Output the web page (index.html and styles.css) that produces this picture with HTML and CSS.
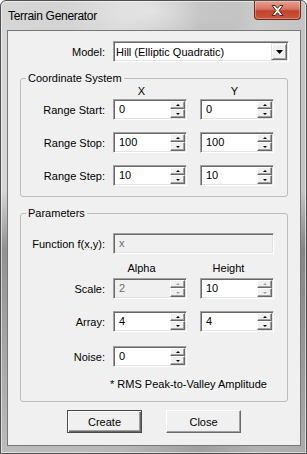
FILE: index.html
```html
<!DOCTYPE html>
<html lang="en">
<head>
  <meta charset="UTF-8" />
  <title>Terrain Generator</title>
  <link rel="stylesheet" href="styles.css">
</head>
<body>

  <!-- Window frame -->
  <div class="window">
    <div class="titlebar">
      <span class="title">Terrain Generator</span>
      <div class="close-x">
        <svg width="13" height="11" viewBox="0 0 13 11">
          <path d="M1 0.5h3.2l2.3 2.8 2.3-2.8h3.2l-3.9 5 3.9 5h-3.2l-2.3-2.8-2.3 2.8h-3.2l3.9-5z" fill="#fff" stroke="#5a2219" stroke-width="1"/>
        </svg>
      </div>
    </div>

    <div class="client">
      <div class="model-row">
        <label>Model:</label>
        <div class="combo">
          <span class="value">Hill (Elliptic Quadratic)</span>
          <span class="drop-btn">
            <svg width="7" height="4" viewBox="0 0 7 4"><path d="M0 0h7L3.5 4z"/></svg>
          </span>
        </div>
      </div>

      <!-- Coordinate System -->
      <fieldset class="group">
        <legend>Coordinate System</legend>
        <div class="head-row"><span>X</span><span class="col-y">Y</span></div>
        <div class="row first">
          <label>Range Start:</label>
          <div class="spin"><span class="val">0</span><span class="arrows"><i class="up"></i><i class="down"></i></span></div>
          <div class="spin"><span class="val">0</span><span class="arrows"><i class="up"></i><i class="down"></i></span></div>
        </div>
        <div class="row">
          <label>Range Stop:</label>
          <div class="spin"><span class="val">100</span><span class="arrows"><i class="up"></i><i class="down"></i></span></div>
          <div class="spin"><span class="val">100</span><span class="arrows"><i class="up"></i><i class="down"></i></span></div>
        </div>
        <div class="row">
          <label>Range Step:</label>
          <div class="spin"><span class="val">10</span><span class="arrows"><i class="up"></i><i class="down"></i></span></div>
          <div class="spin"><span class="val">10</span><span class="arrows"><i class="up"></i><i class="down"></i></span></div>
        </div>
      </fieldset>

      <!-- Parameters -->
      <fieldset class="group params">
        <legend>Parameters</legend>
        <div class="row func">
          <label>Function f(x,y):</label>
          <div class="edit wide disabled"><span class="val">x</span></div>
        </div>
        <div class="head-row gap-top"><span>Alpha</span><span>Height</span></div>
        <div class="row scale">
          <label>Scale:</label>
          <div class="spin disabled"><span class="val">2</span><span class="arrows off"><i class="up"></i><i class="down"></i></span></div>
          <div class="spin"><span class="val">10</span><span class="arrows off"><i class="up"></i><i class="down"></i></span></div>
        </div>
        <div class="row">
          <label>Array:</label>
          <div class="spin"><span class="val">4</span><span class="arrows"><i class="up"></i><i class="down"></i></span></div>
          <div class="spin"><span class="val">4</span><span class="arrows"><i class="up"></i><i class="down"></i></span></div>
        </div>
        <div class="row noise">
          <label>Noise:</label>
          <div class="spin"><span class="val">0</span><span class="arrows"><i class="up"></i><i class="down"></i></span></div>
        </div>
        <div class="note">* RMS Peak-to-Valley Amplitude</div>
      </fieldset>

      <div class="buttons">
        <button class="btn default">Create</button>
        <button class="btn">Close</button>
      </div>
    </div>
  </div>

</body>
</html>
```

FILE: styles.css
```css
* {
  box-sizing: border-box;
}

body {
  margin: 0;
  font-family: "Liberation Sans", Arial, sans-serif;
  font-size: 11px;
  color: #000;
}

/* Window frame */
.window {
  width: 307px;
  height: 454px;
  border: 1px solid #4f4f4f;
  border-radius: 6px 6px 0 0;
  padding: 0 5px 7px 6px;
  display: flex;
  flex-direction: column;
  background:
    linear-gradient(180deg, rgba(0,0,0,0) 42%, rgba(0,0,0,0.32) 55%, rgba(0,0,0,0.12) 100%),
    radial-gradient(ellipse 90px 40px at 150px 10px, rgba(255,255,255,0.5), rgba(255,255,255,0)),
    linear-gradient(90deg, #d6d6d6 0%, #d2d2d2 40%, #b6b6b6 65%, #cbcbcb 85%, #c3c3c3 100%);
  box-shadow: inset 0 0 0 1px rgba(255,255,255,0.55);
}

.titlebar {
  height: 29px;
  display: flex;
  justify-content: space-between;
  align-items: center;
}

.title {
  padding-left: 1px;
  font-size: 12px;
  letter-spacing: -0.3px;
}

.close-x {
  align-self: flex-start;
  width: 47px;
  height: 19px;
  display: flex;
  align-items: center;
  justify-content: center;
  border: 1px solid #6b2a20;
  border-top: none;
  border-radius: 0 0 4px 4px;
  background: linear-gradient(180deg, #e6a090 0%, #d77561 45%, #c2432c 55%, #c9553a 100%);
  box-shadow: inset 0 0 0 1px rgba(255,255,255,0.3);
}

/* Client area */
.client {
  flex: 1;
  border: 1px solid #787878;
  background: #f0f0f0;
  padding-top: 10px;
  display: flex;
  flex-direction: column;
}

.model-row {
  display: flex;
  align-items: center;
}

.model-row label {
  width: 97px;
  margin-right: 8px;
  text-align: right;
}

/* Sunken edit look */
.combo,
.spin,
.edit {
  height: 21px;
  display: flex;
  align-items: center;
  padding: 1px;
  background: #fff;
  border: 1px solid;
  border-color: #a0a0a0 #fff #fff #a0a0a0;
  box-shadow: inset 1px 1px 0 #696969, inset -1px -1px 0 #e3e3e3;
}

.combo {
  width: 176px;
}

.combo .value {
  flex: 1;
  padding-left: 1px;
}

.drop-btn {
  width: 16px;
  height: 17px;
  display: flex;
  align-items: center;
  justify-content: center;
  background: #f0f0f0;
  border: 1px solid;
  border-color: #e3e3e3 #696969 #696969 #e3e3e3;
  box-shadow: inset 1px 1px 0 #fff, inset -1px -1px 0 #a0a0a0;
}

/* Group boxes */
.group {
  margin: 10px 12px 0;
  padding: 0 0 10px;
  border: 1px solid #bcbcbc;
  border-radius: 3px;
  min-width: 0;
}

.group legend {
  margin-left: 5px;
  padding: 0 2px;
  line-height: 13px;
}

.head-row {
  display: flex;
  line-height: 13px;
  padding-left: 92px;
}

.head-row span {
  width: 74px;
  padding-right: 17px;
  text-align: center;
}

.head-row span + span {
  margin-left: 13px;
}

.head-row .col-y {
  padding-left: 6px;
  padding-right: 11px;
}

.row {
  display: flex;
  align-items: center;
  margin-top: 12px;
}

.row.first {
  margin-top: 1px;
}

.row label {
  width: 84px;
  margin-right: 8px;
  text-align: right;
}

.spin {
  width: 74px;
}

.spin + .spin {
  margin-left: 13px;
}

.val {
  flex: 1;
  padding-left: 4px;
  padding-bottom: 2px;
}

.arrows {
  width: 15px;
  height: 17px;
  display: flex;
  flex-direction: column;
}

.arrows i {
  display: flex;
  align-items: center;
  justify-content: center;
  background: #f0f0f0;
  border: 1px solid;
  border-color: #fff #696969 #696969 #fff;
  box-shadow: inset -1px -1px 0 #a0a0a0;
}

.arrows .up {
  height: 8px;
}

.arrows .down {
  height: 9px;
}

.arrows i::after {
  content: "";
  width: 0;
  height: 0;
  border-left: 2px solid transparent;
  border-right: 2px solid transparent;
}

.arrows .up::after {
  border-bottom: 2px solid #000;
}

.arrows .down::after {
  border-top: 2px solid #000;
}

.arrows.off .up::after {
  border-bottom-color: #a0a0a0;
}

.arrows.off .down::after {
  border-top-color: #a0a0a0;
}

.edit.wide {
  width: 161px;
}

.disabled {
  background: #f0f0f0;
  color: #6d6d6d;
}

/* Parameters spacing */
.params {
  margin-top: 10px;
}

.row.func {
  margin-top: 13px;
}

.head-row.gap-top {
  margin-top: 8px;
}

.row.scale {
  margin-top: 3px;
}

.row.noise {
  margin-top: 14px;
}

.note {
  margin-top: 11px;
  padding-left: 89px;
  line-height: 13px;
}

/* Dialog buttons */
.buttons {
  display: flex;
  justify-content: center;
  gap: 24px;
  margin-top: 8px;
}

.btn {
  width: 75px;
  height: 23px;
  font-family: inherit;
  font-size: 11px;
  color: #000;
  background: #f0f0f0;
  border: 1px solid;
  border-color: #fff #696969 #696969 #fff;
  box-shadow: inset -1px -1px 0 #a0a0a0;
  padding: 0;
}

.btn.default {
  border-color: #4a4a4a;
  box-shadow: inset 1px 1px 0 #fff, inset -1px -1px 0 #696969, inset -2px -2px 0 #a0a0a0;
}
```
